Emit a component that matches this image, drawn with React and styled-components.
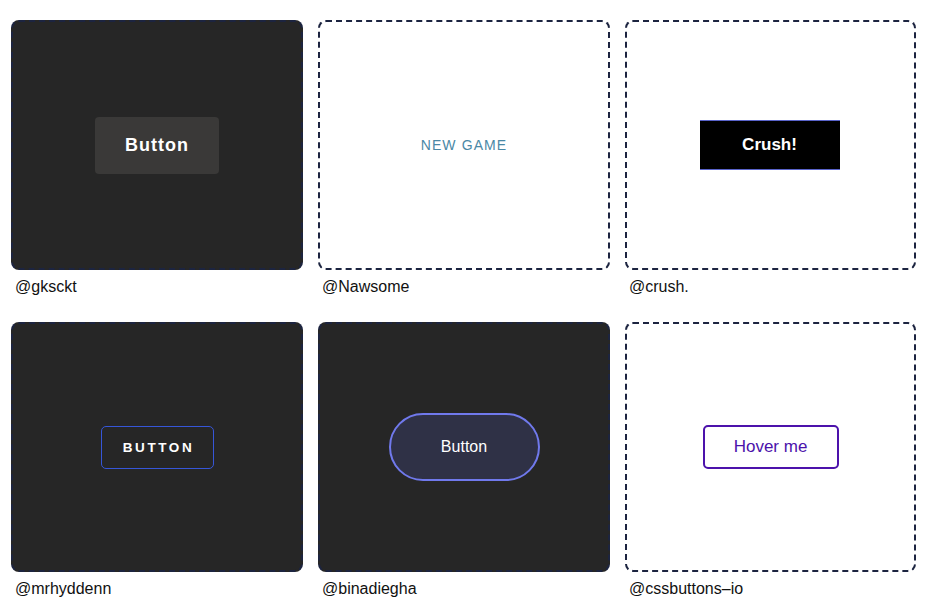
import React from "react";
import styled, { createGlobalStyle } from "styled-components";

const Global = createGlobalStyle`
  html, body { margin: 0; padding: 0; background: #fff; }
  body { font-family: "Liberation Sans", Arial, sans-serif; }
`;

const Grid = styled.div`
  display: grid;
  grid-template-columns: 292px 292px 291px;
  column-gap: 15px;
  row-gap: 0;
  padding: 20px 0 0 11px;
`;

const Item = styled.div`
  display: flex;
  flex-direction: column;
  height: 302px;
`;

const Card = styled.div`
  box-sizing: border-box;
  height: 250px;
  border: 2px dashed #1c2440;
  border-radius: 8px;
  background: ${(p) => (p.$dark ? "#262626" : "#fff")};
  display: flex;
  align-items: center;
  justify-content: center;
`;

const Label = styled.div`
  font-size: 16px;
  color: #111;
  padding: 8px 0 0 4px;
`;

const GkButton = styled.button`
  width: 124px;
  height: 57px;
  border: none;
  border-radius: 4px;
  background: #3a3938;
  color: #fff;
  font-family: "Liberation Sans", Arial, sans-serif;
  font-weight: 700;
  font-size: 18px;
  letter-spacing: 1px;
`;

const NewGame = styled.button`
  background: none;
  border: none;
  color: #4a88a6;
  font-family: "Liberation Sans", Arial, sans-serif;
  font-size: 14px;
  letter-spacing: 1.1px;
`;

const Crush = styled.button`
  width: 140px;
  height: 50px;
  border: none;
  border-top: 1px solid #5963c9;
  border-bottom: 1px solid #5963c9;
  background: #000;
  color: #fff;
  font-family: "Liberation Sans", Arial, sans-serif;
  font-weight: 700;
  font-size: 17px;
  margin-right: 2px;
`;

const Outline = styled.button`
  box-sizing: border-box;
  width: 113px;
  height: 43px;
  border: 1px solid #3656d8;
  border-radius: 5px;
  background: transparent;
  color: #fff;
  font-family: "Liberation Sans", Arial, sans-serif;
  font-weight: 700;
  font-size: 13.5px;
  letter-spacing: 2.6px;
  padding: 0 0 0 3px;
`;

const Pill = styled.button`
  box-sizing: border-box;
  width: 151px;
  height: 68px;
  border: 2px solid #7079ec;
  border-radius: 34px;
  background: #2f3146;
  color: #fff;
  font-family: "Liberation Sans", Arial, sans-serif;
  font-size: 16px;
`;

const Hover = styled.button`
  box-sizing: border-box;
  width: 136px;
  height: 44px;
  border: 2px solid #4c12ab;
  border-radius: 5px;
  background: #fff;
  color: #4c12ab;
  font-family: "Liberation Sans", Arial, sans-serif;
  font-size: 17px;
`;

const items = [
  { dark: true, label: "@gksckt", el: <GkButton>Button</GkButton> },
  { dark: false, label: "@Nawsome", el: <NewGame>NEW GAME</NewGame> },
  { dark: false, label: "@crush.", el: <Crush>Crush!</Crush> },
  { dark: true, label: "@mrhyddenn", el: <Outline>BUTTON</Outline> },
  { dark: true, label: "@binadiegha", el: <Pill>Button</Pill> },
  { dark: false, label: "@cssbuttons–io", el: <Hover>Hover me</Hover> },
];

export default function App() {
  return (
    <>
      <Global />
      <Grid>
        {items.map((it) => (
          <Item key={it.label}>
            <Card $dark={it.dark}>{it.el}</Card>
            <Label>{it.label}</Label>
          </Item>
        ))}
      </Grid>
    </>
  );
}
